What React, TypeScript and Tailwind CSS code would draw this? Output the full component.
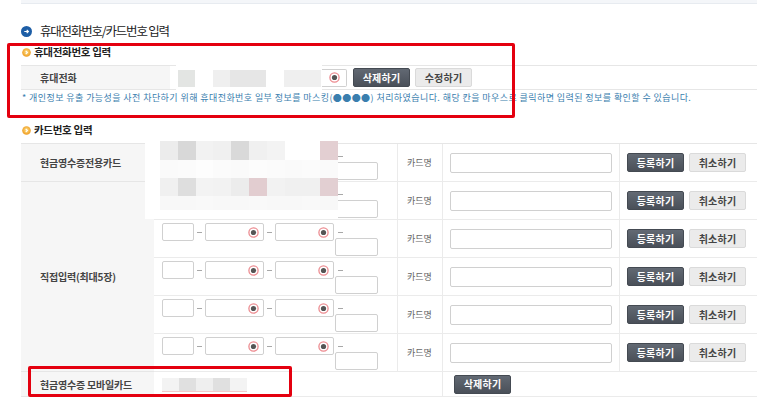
import React from 'react';

const cardMosaicRows = [
  { h: 'h-[19px]', cells: ['bg-[#ececec]', 'bg-[#d8d8d8]', 'bg-[#f2f2f2]', 'bg-[#f0f0f0]', 'bg-[#d9d9d9]', 'bg-[#f0f0f0]', 'bg-[#f3f3f3]', 'bg-white', 'bg-white', 'bg-[#e3cfd2]'] },
  { h: 'h-[18px]', cells: ['bg-[#fafafa]', 'bg-[#fbfbfb]', 'bg-[#fdfdfd]', 'bg-[#fbfbfb]', 'bg-[#fafafa]', 'bg-[#fcfcfc]', 'bg-[#fbfbfb]', 'bg-[#fafafa]', 'bg-[#fbfbfb]', 'bg-[#fafafa]'] },
  { h: 'h-[18px]', cells: ['bg-[#f0f0f0]', 'bg-[#dedede]', 'bg-[#f3f3f3]', 'bg-[#f2f2f2]', 'bg-[#ececec]', 'bg-[#e2cdd0]', 'bg-[#f2f2f2]', 'bg-[#f0f0f0]', 'bg-[#f0f0f0]', 'bg-[#e2cfd2]'] },
  { h: 'h-[14px]', cells: ['bg-[#f8f8f8]', 'bg-[#f8f8f8]', 'bg-[#f9f9f9]', 'bg-[#f8f8f8]', 'bg-[#f8f8f8]', 'bg-[#f9f9f9]', 'bg-[#f8f8f8]', 'bg-[#f8f8f8]', 'bg-[#f9f9f9]', 'bg-[#f8f8f8]'] },
];

const mobileMosaic = ['bg-[#f3f3f3]', 'bg-[#e0e0e0]', 'bg-[#efefef]', 'bg-[#e0e0e0]', 'bg-[#f3f3f3]'];

function EyeIcon() {
  return (
    <svg width="11" height="11" viewBox="0 0 11 11">
      <circle cx="5.5" cy="5.5" r="4.6" fill="#fff" stroke="#ec8b90" strokeWidth="1.3" />
      <circle cx="5.5" cy="5.5" r="2.6" fill="#555" />
    </svg>
  );
}

function Dash({ wide = true }: { wide?: boolean }) {
  return (
    <div className={wide ? 'w-[11px] flex justify-center' : 'ml-[4px] flex'}>
      <div className="w-[5px] h-px bg-[#a8a8a8]" />
    </div>
  );
}

function DarkButton({ label }: { label: string }) {
  return (
    <button className="w-[57px] h-[19px] rounded-[2px] border border-[#444a52] bg-gradient-to-b from-[#626973] to-[#4a5059] text-white text-[10px] font-bold leading-none tracking-[0.2px]">
      {label}
    </button>
  );
}

function LightButton({ label }: { label: string }) {
  return (
    <button className="w-[57px] h-[19px] rounded-[2px] border border-[#dadada] bg-[#ebebeb] text-[#444] text-[10px] font-bold leading-none tracking-[0.2px]">
      {label}
    </button>
  );
}

function Label({ text, className }: { text: string; className: string }) {
  return (
    <div className={`${className} bg-[#f6f6f6] border-b border-[#e6e6e6] flex items-center justify-start pl-[19px]`}>
      <span className="text-[10px] font-semibold text-[#444] tracking-[-0.2px] whitespace-nowrap">{text}</span>
    </div>
  );
}

function CardNumberInputs() {
  return (
    <div className="pl-[8px] pt-[3px]">
      <div className="flex items-center h-[18px]">
        <div className="w-[32px] h-[18px] border border-[#d0d0d0] rounded-[2px] bg-white" />
        <Dash />
        <div className="w-[59px] h-[18px] border border-[#d0d0d0] rounded-[2px] bg-white flex items-center justify-end pr-[4px]">
          <EyeIcon />
        </div>
        <Dash />
        <div className="w-[59px] h-[18px] border border-[#d0d0d0] rounded-[2px] bg-white flex items-center justify-end pr-[4px]">
          <EyeIcon />
        </div>
        <Dash wide={false} />
      </div>
      <div className="pl-[173px] -mt-[3px]">
        <div className="w-[43px] h-[18px] border border-[#d0d0d0] rounded-[2px] bg-white" />
      </div>
    </div>
  );
}

function CardRowRest() {
  return (
    <>
      <div className="h-[38px] border-b border-l border-[#ebebeb] flex items-center pl-[9px] text-[9px] text-[#666]">카드명</div>
      <div className="h-[38px] border-b border-l border-[#ebebeb] flex items-center pl-[7px]">
        <div className="w-[162px] h-[20px] border border-[#d0d0d0] rounded-[2px] bg-white" />
      </div>
      <div className="h-[38px] border-b border-l border-[#ebebeb] flex items-center gap-[5px] pl-[7px]">
        <DarkButton label="등록하기" />
        <LightButton label="취소하기" />
      </div>
    </>
  );
}

function SubHeading({ text }: { text: string }) {
  return (
    <div className="flex items-center h-[12px] gap-[3px] pl-[1px]">
      <svg width="9" height="9" viewBox="0 0 9 9">
        <defs>
          <radialGradient id="og" cx="50%" cy="45%" r="55%">
            <stop offset="0%" stopColor="#fde08a" />
            <stop offset="100%" stopColor="#ef9a1c" />
          </radialGradient>
        </defs>
        <circle cx="4.5" cy="4.5" r="4.3" fill="url(#og)" />
        <path d="M3.7 2.9 L5.4 4.5 L3.7 6.1" stroke="#fff" strokeWidth="1.1" fill="none" />
      </svg>
      <span className="text-[10.5px] font-bold text-[#222] tracking-[-0.3px] leading-none">{text}</span>
    </div>
  );
}

export default function App() {
  return (
    <div className="relative w-[773px] h-[408px] overflow-hidden bg-white font-['Noto_Sans_CJK_KR','Noto_Sans',sans-serif]">
      <div className="pl-[21px]">
        <div className="w-[736px] h-[4px] bg-[#f4f6f9] border-b border-[#e7ebf0]" />

        <div className="mt-[19px] flex items-center h-[16px] gap-[8px]">
          <svg width="11" height="11" viewBox="0 0 11 11">
            <circle cx="5.5" cy="5.5" r="5.5" fill="#1d5ea6" />
            <path d="M3.3 5.5 H7.4 M5.7 3.8 L7.4 5.5 L5.7 7.2" stroke="#fff" strokeWidth="1.2" fill="none" />
          </svg>
          <span className="text-[12.5px] text-[#222] tracking-[-1.2px] leading-none">휴대전화번호/카드번호 입력</span>
        </div>

        <div className="mt-[7px]">
          <SubHeading text="휴대전화번호 입력" />
        </div>

        <div className="mt-[7px] w-[736px] h-[25px] flex border-t border-b border-[#e6e6e6]">
          <div className="w-[149px] bg-[#f6f6f6] flex items-center pl-[19px] text-[10px] font-semibold text-[#444] tracking-[0px]">휴대전화</div>
          <div className="flex items-center">
            <div className="ml-[6px] -my-[1px] h-[25px] w-[146px] bg-white flex pt-[5px]">
              <div className="w-[2px]" />
              <div className="w-[17px] h-[17px] bg-[#e3e5e3]" />
              <div className="w-[18px]" />
              <div className="w-[17px] h-[17px] bg-[#efefef]" />
              <div className="w-[36px] h-[17px] bg-[#e6e6e6]" />
              <div className="w-[18px]" />
              <div className="w-[37px] h-[17px] bg-[#efefef]" />
            </div>
            <div className="w-[25px] h-[18px] border border-l-0 border-[#d0d0d0] rounded-r-[2px] bg-white flex items-center justify-center">
              <EyeIcon />
            </div>
            <div className="ml-[6px] flex gap-[5px]">
              <DarkButton label="삭제하기" />
              <LightButton label="수정하기" />
            </div>
          </div>
        </div>

        <p className="mt-[2px] h-[11px] pl-[1px] text-[9px] leading-[11px] text-[#3a7eae] tracking-[0.42px] whitespace-nowrap">
          * 개인정보 유출 가능성을 사전 차단하기 위해 휴대전화번호 일부 정보를 마스킹(●●●●) 처리하였습니다. 해당 칸을 마우스로 클릭하면 입력된 정보를 확인할 수 있습니다.
        </p>

        <div className="mt-[21px]">
          <SubHeading text="카드번호 입력" />
        </div>

        <div className="relative mt-[7px] w-[736px] border-t border-[#e6e6e6] grid grid-cols-[133px_243px_45px_177px_138px]">
          <Label className="h-[38px]" text="현금영수증전용카드" />
          <div className="h-[38px] border-b border-[#ebebeb]"><CardNumberInputs /></div>
          <CardRowRest />

          <Label className="row-span-5" text="직접입력(최대5장)" />
          {[0, 1, 2, 3, 4].map((i) => (
            <React.Fragment key={i}>
              <div className="h-[38px] border-b border-[#ebebeb]"><CardNumberInputs /></div>
              <CardRowRest />
            </React.Fragment>
          ))}

          <Label className="h-[25px]" text="현금영수증 모바일카드" />
          <div className="col-span-2 h-[25px] border-b border-[#ebebeb] pl-[8px] pt-[6px]">
            <div className="flex w-[85px] h-[14px] border-b border-[#f3c9c9]">
              {mobileMosaic.map((c, i) => (
                <div key={i} className={`w-[17px] h-[13px] ${c}`} />
              ))}
            </div>
          </div>
          <div className="col-span-2 h-[25px] border-b border-l border-[#ebebeb] flex items-center pl-[11px]">
            <DarkButton label="삭제하기" />
          </div>

          <div className="absolute left-[124px] -top-[3px] w-[193px] h-[78px] bg-white pl-[15px]">
            {cardMosaicRows.map((r, ri) => (
              <div key={ri} className={`flex ${r.h}`}>
                {r.cells.map((c, ci) => (
                  <div key={ci} className={`w-[18px] ${c}`} />
                ))}
              </div>
            ))}
          </div>
        </div>
      </div>

      <div className="absolute left-[7px] top-[43px] w-[508px] h-[75px] border-[3px] border-[#e4000f] rounded-[2px]" />
      <div className="absolute left-[28px] top-[366px] w-[264px] h-[31px] border-[3px] border-[#e4000f] rounded-[2px]" />
    </div>
  );
}
